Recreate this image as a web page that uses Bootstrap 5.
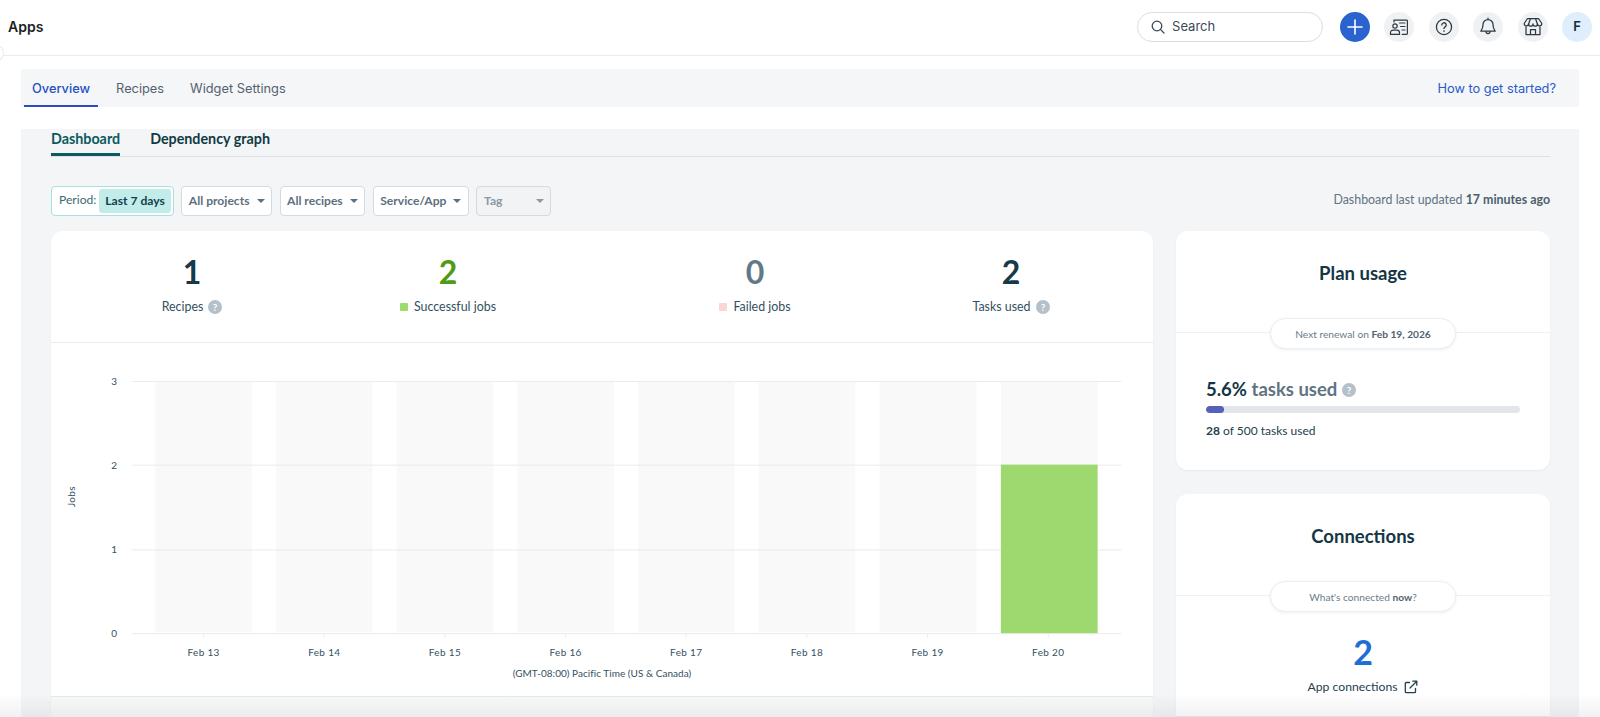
<!DOCTYPE html>
<html lang="en">
<head>
<meta charset="utf-8">
<title>Apps</title>
<link href="https://cdn.jsdelivr.net/npm/bootstrap@5.3.0/dist/css/bootstrap.min.css" rel="stylesheet">
<style>
html,body{height:717px;overflow:hidden}
body{background:#fff;font-family:"Lato","Noto Sans",sans-serif;color:#12343f;position:relative}
.ui-font{font-family:"Inter","Liberation Sans",sans-serif}
.top-bar{height:56px;border-bottom:1px solid #e9ebee;padding:0 8px 2px}
.page-title{font-size:14px;font-weight:600;color:#1a1f26}
.search-box{width:186px;height:30px;border:1px solid #d8dee6;border-radius:15px;padding-left:13px;gap:7px;font-size:13px;color:#3c4a57;background:#fff;margin-right:17px}
.round-btn{width:30px;height:30px;border-radius:50%;background:#f0f1f3;color:#2c3a47;flex:none;padding:0;border:0}
.round-btn.is-add{background:#2a63cf;color:#fff}
.round-btn.is-user{background:#deeefc;color:#14283c;font-size:13px;font-weight:600}
.top-actions{gap:14.4px}
.page-wrap{padding:13px 21px 0}
.tab-strip{height:38px;background:#f4f6f8;border-radius:3px;padding:0 23px 0 3px}
.tab-strip .nav-link{font-size:12.8px;color:#56616d;padding:0 8px;height:38px;line-height:39px;margin-right:10px;border-bottom:2px solid transparent}
.tab-strip .nav-link.active{color:#2450c4;font-weight:500;border-bottom-color:#2450c4}
.help-link{font-size:12.8px;color:#2a5bc9;text-decoration:none;line-height:39px}
.dash-panel{margin-top:22px;background:#f3f5f7;padding:0 29px 0 30px;height:588px;overflow:hidden}
.sub-tabs{border-bottom:1px solid #dde1e5;height:28px}
.sub-tabs .nav-link{font-size:14.3px;font-weight:700;color:#0f3a42;padding:0;height:27px;line-height:20px;margin-right:30px}
.sub-tabs .nav-link.active{color:#0b5a5e;border-bottom:3px solid #0b5a5e}
.filter-row{margin-top:28px;height:31px;gap:7.5px}
.filter-btn{height:30px;font-size:12.1px;font-weight:700;color:#5c7080;background:#fff;border:1px solid #d4dbe0;border-radius:4px;padding:1px 6.5px 0;gap:7px}
.filter-btn.is-off{background:#f1f3f5;color:#8b99a4;width:75px;justify-content:space-between}
.filter-btn.is-period{border-color:#a9dfe0;padding:0 2px 0 7px;gap:3px;font-weight:400;color:#3b6a72}
.period-val{background:#c2ecea;color:#12404a;border-radius:3px;padding:0 6px;height:24px;line-height:24px;font-weight:700}
.caret-down{width:0;height:0;border-left:4px solid transparent;border-right:4px solid transparent;border-top:4px solid currentColor}
.updated-note{font-size:12.4px;color:#62727f}
.updated-note b{color:#4d5f6c}
.dash-grid{display:grid;grid-template-columns:1102px 374px;gap:23px;margin-top:15px}
.plain-card{border:0;border-radius:12px;background:#fff;box-shadow:0 1px 2px rgba(30,50,70,.05)}
.main-card{height:486px}
.stat-band{height:112px;padding:0 14px 0 13px;border-bottom:1px solid #e9ebef}
.stat-cell{width:256px;text-align:center;padding-top:18px}
.stat-num{font-size:32px;font-weight:700;line-height:46px;color:#17394a}
.stat-num.is-green{color:#4f9a16}
.stat-num.is-grey{color:#627889}
.stat-label{font-size:12.4px;line-height:18px;margin-top:3px;color:#33505f;gap:5px}
.legend-dot{width:8px;height:8px;border-radius:1px;margin-right:1px}
.legend-dot.is-green{background:#9ddb6c}
.legend-dot.is-red{background:#fbd7d3}
.hint-icon{width:14px;height:14px;flex:none;color:#b4c0ca;display:inline-block;vertical-align:-1px}
.chart-area{height:354px;flex:none;display:block;width:100%;border-bottom:1px solid #e7e9ec}
.chart-area text{font-family:"Lato","Noto Sans",sans-serif;font-size:10px;fill:#33505f;letter-spacing:.35px}
.chart-area .axis-note{letter-spacing:.05px}
.card-tail{flex:1;background:#f8f9f9}
.side-stack{gap:24px}
.side-title{font-size:18.5px;font-weight:700;color:#143644;text-align:center;line-height:24px;padding-top:30px}
.side-rule{margin-top:33px;height:32px}
.side-rule::before{content:"";position:absolute;left:0;right:0;top:14px;border-top:1px solid #eef0f3}
.side-pill{position:relative;width:186px;height:31px;line-height:30px;background:#fff;border:1px solid #eceef1;border-radius:16px;box-shadow:0 1px 3px rgba(30,50,70,.08);font-size:10.2px;color:#6a7c89;text-align:center;margin:0 auto}
.side-pill b{color:#4f6270}
.usage-block{padding:28px 30px 0;height:120px}
.usage-head{font-size:18.5px;font-weight:700;line-height:22px;color:#143644}
.usage-head span{color:#5f7483}
.usage-bar{height:7px;background:#e2e6ea;border-radius:4px;margin-top:6px}
.usage-bar .progress-bar{background:#5560b8;border-radius:4px}
.usage-note{font-size:12px;line-height:18px;margin-top:9px;color:#24404d}
.conn-num{font-size:34px;font-weight:700;color:#1d6fd6;text-align:center;line-height:40px;margin-top:19px}
.conn-link{font-size:12.2px;text-align:center;color:#24404d;margin-top:5px;line-height:20px;gap:7px}
.conn-card{height:222px}
.edge-tab{position:absolute;left:-10px;top:45px;width:14px;height:16px;background:#fff;border:1px solid #e9ebee;border-radius:50%}
.bottom-fade{position:absolute;left:0;right:0;bottom:0;height:24px;background:linear-gradient(to bottom,rgba(60,60,60,0),rgba(60,60,60,.07));pointer-events:none}
</style>
</head>
<body>
<header class="top-bar d-flex align-items-center justify-content-between">
  <div class="page-title ui-font">Apps</div>
  <div class="d-flex align-items-center ui-font">
    <div class="search-box d-flex align-items-center">
      <svg width="14" height="14" viewBox="0 0 14 14" fill="none" stroke="#3c4a57" stroke-width="1.3" stroke-linecap="round"><circle cx="6" cy="6" r="4.8"/><path d="M9.6 9.6 13 13"/></svg>
      <span>Search</span>
    </div>
    <div class="top-actions d-flex align-items-center">
      <button class="round-btn is-add d-flex align-items-center justify-content-center" aria-label="Add">
        <svg width="16" height="16" viewBox="0 0 16 16" fill="none" stroke="currentColor" stroke-width="1.6" stroke-linecap="round"><path d="M8 1v14M1 8h14"/></svg>
      </button>
      <button class="round-btn d-flex align-items-center justify-content-center" aria-label="Directory">
        <svg width="20" height="20" viewBox="0 0 20 20" fill="none" stroke="currentColor" stroke-width="1.2" stroke-linecap="round"><path d="M5 5V3.2h12.6a.8.8 0 0 1 .8.8v12.5a.8.8 0 0 1-.8.8h-4.4"/><path d="M10.5 6h5.5M11.5 9.5h4.5M13 13h3"/><circle cx="6" cy="9" r="2.2"/><path d="M1.5 17.3v-1.6a2.6 2.6 0 0 1 2.6-2.6h3.8a2.6 2.6 0 0 1 2.6 2.6v1.6z"/></svg>
      </button>
      <button class="round-btn d-flex align-items-center justify-content-center" aria-label="Help">
        <svg width="18" height="18" viewBox="0 0 18 18" fill="none" stroke="currentColor" stroke-width="1.3" stroke-linecap="round"><circle cx="9" cy="9" r="7.6"/><path d="M6.8 7a2.2 2.2 0 1 1 3.3 1.9c-.7.4-1.1.9-1.1 1.7"/><path d="M9 13v.1" stroke-width="1.6"/></svg>
      </button>
      <button class="round-btn d-flex align-items-center justify-content-center" aria-label="Notifications">
        <svg width="18" height="19" viewBox="0 0 18 19" fill="none" stroke="currentColor" stroke-width="1.25" stroke-linecap="round" stroke-linejoin="round"><path d="M9 1v1.6M9 2.6a5 5 0 0 0-5 5c0 3.6-1 5.2-2.2 6.6h14.4C15 12.800 14 11.200 14 7.600a5 5 0 0 0-5-5z"/><path d="M7 14.500a2 2 0 0 0 4 0"/></svg>
      </button>
      <button class="round-btn d-flex align-items-center justify-content-center" aria-label="Store">
        <svg width="20" height="19" viewBox="0 0 20 19" fill="none" stroke="currentColor" stroke-width="1.25" stroke-linejoin="round"><path d="M4.500 1.500h11L18.800 6.500a2.200 2.200 0 0 1-4.400.4 2.200 2.200 0 0 1-4.400 0 2.200 2.200 0 0 1-4.400 0 2.200 2.200 0 0 1-4.400-.4z"/><path d="M7.500 1.500 5.600 7M12.500 1.500 14.400 7"/><path d="M3 9.500v8h14v-8"/><path d="M7.500 17.500v-5h5v5"/></svg>
      </button>
      <button class="round-btn is-user ui-font">F</button>
    </div>
  </div>
</header>
<span class="edge-tab"></span>

<div class="page-wrap">
  <nav class="tab-strip d-flex align-items-center justify-content-between ui-font">
    <ul class="nav">
      <li class="nav-item"><a class="nav-link active" href="#">Overview</a></li>
      <li class="nav-item"><a class="nav-link" href="#">Recipes</a></li>
      <li class="nav-item"><a class="nav-link" href="#">Widget Settings</a></li>
    </ul>
    <a class="help-link" href="#">How to get started?</a>
  </nav>

  <section class="dash-panel">
    <ul class="nav sub-tabs">
      <li class="nav-item"><a class="nav-link active" href="#">Dashboard</a></li>
      <li class="nav-item"><a class="nav-link" href="#">Dependency graph</a></li>
    </ul>

    <div class="filter-row d-flex align-items-center">
      <div class="filter-btn is-period d-flex align-items-center">Period: <span class="period-val">Last 7 days</span></div>
      <div class="filter-btn d-flex align-items-center">All projects <i class="caret-down"></i></div>
      <div class="filter-btn d-flex align-items-center">All recipes <i class="caret-down"></i></div>
      <div class="filter-btn d-flex align-items-center">Service/App <i class="caret-down"></i></div>
      <div class="filter-btn is-off d-flex align-items-center">Tag <i class="caret-down"></i></div>
      <div class="updated-note ms-auto">Dashboard last updated <b>17 minutes ago</b></div>
    </div>

    <div class="dash-grid">
      <div class="card plain-card main-card overflow-hidden rounded-bottom-0">
        <div class="stat-band d-flex justify-content-between flex-none">
          <div class="d-flex">
            <div class="stat-cell">
              <div class="stat-num">1</div>
              <div class="stat-label d-flex align-items-center justify-content-center">Recipes
                <svg class="hint-icon" viewBox="0 0 14 14"><circle cx="7" cy="7" r="7" fill="currentColor"/><text x="7" y="10.500" text-anchor="middle" font-size="10" font-weight="700" fill="#fff">?</text></svg>
              </div>
            </div>
            <div class="stat-cell">
              <div class="stat-num is-green">2</div>
              <div class="stat-label d-flex align-items-center justify-content-center"><i class="legend-dot is-green"></i>Successful jobs</div>
            </div>
          </div>
          <div class="d-flex">
            <div class="stat-cell">
              <div class="stat-num is-grey">0</div>
              <div class="stat-label d-flex align-items-center justify-content-center"><i class="legend-dot is-red"></i>Failed jobs</div>
            </div>
            <div class="stat-cell">
              <div class="stat-num">2</div>
              <div class="stat-label d-flex align-items-center justify-content-center">Tasks used
                <svg class="hint-icon" viewBox="0 0 14 14"><circle cx="7" cy="7" r="7" fill="currentColor"/><text x="7" y="10.500" text-anchor="middle" font-size="10" font-weight="700" fill="#fff">?</text></svg>
              </div>
            </div>
          </div>
        </div>
        <svg class="chart-area" viewBox="0 0 1102 354" role="img" aria-label="Jobs per day">
          <g fill="#f9f9f9">
            <rect x="103" y="38" width="97" height="252"/><rect x="224" y="38" width="97" height="252"/><rect x="345" y="38" width="97" height="252"/><rect x="466" y="38" width="97" height="252"/><rect x="587" y="38" width="97" height="252"/><rect x="708" y="38" width="97" height="252"/><rect x="829.500" y="38" width="97" height="252"/><rect x="951" y="38" width="97" height="252"/>
          </g>
          <g stroke="#e9ebef" stroke-width="1">
            <path d="M79 38.500H1072M79 122.500H1072M79 207.500H1072M79 291.500H1072"/>
            <path d="M151.500 291v4M272.500 291v4M393.500 291v4M514.500 291v4M635.500 291v4M756.500 291v4M877.500 291v4M998.500 291v4"/>
          </g>
          <rect x="951" y="122" width="97" height="169" fill="#9dd96e"/>
          <g text-anchor="end">
            <text x="65" y="42">3</text><text x="65" y="126">2</text><text x="65" y="211">1</text><text x="65" y="295">0</text>
          </g>
          <g text-anchor="middle">
            <text x="151.500" y="314">Feb 13</text><text x="272.500" y="314">Feb 14</text><text x="393.500" y="314">Feb 15</text><text x="514.500" y="314">Feb 16</text><text x="635.500" y="314">Feb 17</text><text x="756.500" y="314">Feb 18</text><text x="877.500" y="314">Feb 19</text><text x="998.500" y="314">Feb 20</text>
            <text class="axis-note" x="551" y="335">(GMT-08:00) Pacific Time (US &amp; Canada)</text>
            <text transform="translate(23 154) rotate(-90)">Jobs</text>
          </g>
        </svg>
        <div class="card-tail"></div>
      </div>

      <div class="side-stack d-flex flex-column">
        <div class="card plain-card">
          <div class="side-title">Plan usage</div>
          <div class="side-rule position-relative"><div class="side-pill">Next renewal on <b>Feb 19, 2026</b></div></div>
          <div class="usage-block">
            <div class="usage-head">5.6% <span>tasks used</span>
              <svg class="hint-icon" viewBox="0 0 14 14"><circle cx="7" cy="7" r="7" fill="currentColor"/><text x="7" y="10.500" text-anchor="middle" font-size="10" font-weight="700" fill="#fff">?</text></svg>
            </div>
            <div class="progress usage-bar"><div class="progress-bar" style="width:5.6%"></div></div>
            <div class="usage-note"><b>28</b> of 500 tasks used</div>
          </div>
        </div>
        <div class="card plain-card conn-card rounded-bottom-0">
          <div class="side-title">Connections</div>
          <div class="side-rule position-relative"><div class="side-pill">What's connected <b>now</b>?</div></div>
          <div class="conn-num">2</div>
          <div class="conn-link d-flex align-items-center justify-content-center">App connections
            <svg width="14" height="14" viewBox="0 0 14 14" fill="none" stroke="currentColor" stroke-width="1.300" stroke-linecap="round" stroke-linejoin="round"><path d="M11.500 8.500v3.200a1 1 0 0 1-1 1H2.300a1 1 0 0 1-1-1V3.500a1 1 0 0 1 1-1h3.200"/><path d="M6 8 12.800 1.200M8.800 1.200h4v4"/></svg>
          </div>
        </div>
      </div>
    </div>
  </section>
</div>
<div class="bottom-fade"></div>
<script src="https://cdn.jsdelivr.net/npm/bootstrap@5.3.0/dist/js/bootstrap.bundle.min.js"></script>
</body>
</html>
